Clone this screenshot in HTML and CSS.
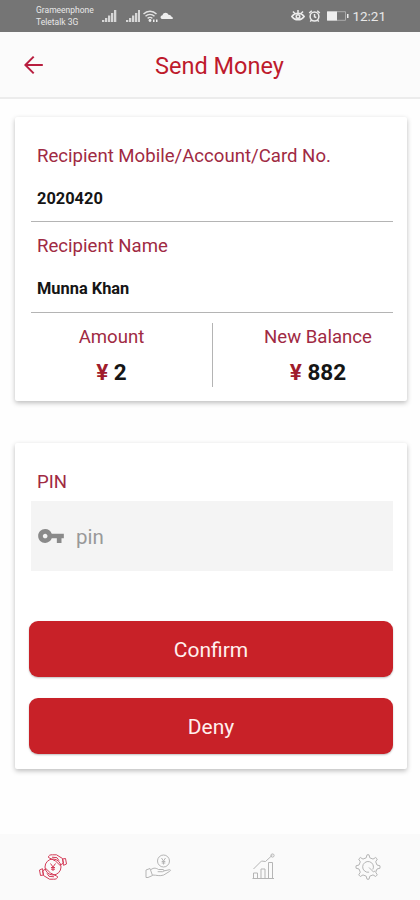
FILE: index.html
```html
<!DOCTYPE html>
<html lang="en">
  <head>
    <meta charset="UTF-8" />
    <meta name="viewport" content="width=device-width, initial-scale=1.0" />
    <title>Send Money</title>
    <link rel="stylesheet" href="styles.css">
  </head>
  <body>
    <div class="status">
      <div class="carrier">
        <p>Grameenphone</p>
        <p>Teletalk 3G</p>
      </div>
      <svg class="signals" width="72" height="14" viewBox="0 0 72 14">
        <g fill="#d6d6d6">
          <path d="M0 10h2.300v2H0zM3 8h2.300v4H3zM6 5.500h2.300V12H6zM9 3h2.300v9H9zM12 0h2.300v12H12z" />
          <path d="M24 10h2.300v2H24zM27 8h2.300v4H27zM30 5.500h2.300V12H30zM33 3h2.300v9H33zM36 0h2v12h-2z" />
        </g>
        <g fill="#eee">
          <path d="M60 9c-2-.5-2-3.500.5-3.800C61.500 2 65.500 2 66.500 4.800c2 0 2.700 1.200 3.300 2.300 1.700.2 1.700 1.900 0 1.900z" />
          <circle cx="48" cy="10.500" r="1.400" />
          <path d="M51 9.500h1.500v2.500H51zM54 9.500h1.500v2.500H54z" />
        </g>
        <g fill="none" stroke="#e2e2e2" stroke-width="1.400">
          <path d="M41.500 4c3.700-3.600 9.300-3.600 13 0M43.500 6.200c2.600-2.500 6.400-2.500 9 0M45.600 8.400c1.500-1.300 3.300-1.300 4.800 0" />
        </g>
      </svg>
      <svg class="tools" width="58" height="14" viewBox="0 0 58 14">
        <g fill="none" stroke="#ececec" stroke-width="1.500">
          <path d="M.8 7.500c3-4.200 9.400-4.200 12.400 0-3 4.400-9.400 4.400-12.400 0zM2 2.500l1.800 2M7 1v3M12 2.500l-1.800 2" />
          <circle cx="7" cy="7.500" r="1.800" />
          <circle cx="23.500" cy="7.500" r="4.400" />
          <path d="M23.500 5v2.700l1.800 1M18.200 4l2.600-2.300M28.800 4l-2.600-2.300M20.500 11l-1.200 1.600M26.500 11l1.200 1.600" />
          <path d="M36.500 2.700h18v8.600h-18z" stroke="#aaa" stroke-width="1" />
        </g>
        <path d="M36 2.500h10v9H36zM56 5h1.500v4H56z" fill="#eee" />
      </svg>
      <span class="time">12:21</span>
    </div>

    <div class="header">
      <svg class="back" width="20" height="20" viewBox="0 0 20 20" fill="none" stroke="#b81e3f" stroke-width="2">
        <path d="M18.800 10H1.500M9.700 1.600L1.300 10l8.400 8.400" />
      </svg>
      <h1>Send Money</h1>
    </div>

    <div class="main">
      <div class="card info">
        <div class="row">
          <p class="label">Recipient Mobile/Account/Card No.</p>
          <p class="value">2020420</p>
        </div>
        <div class="row">
          <p class="label">Recipient Name</p>
          <p class="value">Munna Khan</p>
        </div>
        <div class="totals">
          <div class="total">
            <p class="label">Amount</p>
            <p class="money"><span>¥</span> 2</p>
          </div>
          <div class="line"></div>
          <div class="total balance">
            <p class="label">New Balance</p>
            <p class="money"><span>¥</span> 882</p>
          </div>
        </div>
      </div>

      <div class="card form">
        <p class="label">PIN</p>
        <div class="field">
          <svg width="28" height="28" viewBox="0 0 24 24" fill="#8a8a8a">
            <path d="M12.650 10C11.830 7.670 9.610 6 7 6c-3.310 0-6 2.690-6 6s2.690 6 6 6c2.610 0 4.830-1.670 5.650-4H17v4h4v-4h2v-4H12.650zM7 14c-1.100 0-2-.9-2-2s.9-2 2-2 2 .9 2 2-.9 2-2 2z" />
          </svg>
          <input type="text" placeholder="pin" />
        </div>
        <button class="btn">Confirm</button>
        <button class="btn">Deny</button>
      </div>
    </div>

    <div class="nav">
      <a class="active">
        <svg width="30" height="28" viewBox="0 0 30 28">
          <circle cx="15" cy="14" r="8" />
          <path d="M12.500 10.500l2.500 3.500 2.500-3.500M15 14v4M13 14.500h4M13 16.200h4" />
          <path d="M10.500 4.500c-.5-2 2-3 4-2.700h4l6 3.700 1 4.500-3.500 2.300-4.500-4.300-7-3.500M14 4.200l5 .5 2 3M24.500 6l3-.5 1 5.500-3 1.300z" />
          <path d="M19.500 23.500c.5 2-2 3-4 2.700h-4l-6-3.700-1-4.500L8 15.700l4.500 4.300 7 3.500M16 23.800l-5-.5-2-3M5.500 22l-3 .5-1-5.500 3-1.300z" />
        </svg>
      </a>
      <a>
        <svg width="30" height="28" viewBox="0 0 30 28">
          <circle cx="20.500" cy="8" r="6" />
          <path d="M18.500 5l2 3 2-3M20.500 8v3.500M18.700 8.500h3.600M18.700 10h3.600" />
          <path d="M3 17l4-1.500 2.500 7L5 24.500H3zM8 16.500c3-2 5-1.500 7.500 0h4.500c1.500.2 1.200 2-.3 2.200h-5M20.500 18l6-1.300c1.300 0 1.200 1 .2 1.600l-6 3.700c-4 1.500-7 0-11.200 0" />
        </svg>
      </a>
      <a>
        <svg width="30" height="28" viewBox="0 0 30 28">
          <path d="M4.500 25.500h21.500M5.500 25.500V20h4v5.500M13 25.500v-9.500h4v9.500M20.500 25.500V9.500h4v16M5.500 16l8-8 4 .5 7-6.500" />
          <circle cx="24.500" cy="2.500" r="1.600" />
        </svg>
      </a>
      <a>
        <svg width="30" height="28" viewBox="0 0 30 28">
          <path d="M13.200 4.800l.8-3h2l.8 3 3.200 1.300 2.700-1.600 1.600 1.600-1.600 2.700 1.300 3.200 3 .8v2.400l-3 .8-1.300 3.200 1.600 2.700-1.600 1.600-2.700-1.600-3.200 1.300-.8 3h-2l-.8-3L10 21.900l-2.700 1.600-1.600-1.600 1.600-2.700L6 16l-3-.8v-2.400l3-.8 1.300-3.200-1.600-2.700 1.600-1.600L10 6.100z" />
          <path d="M19.800 16.500a5.400 5.400 0 1 0-3.700 2.700M16 14.500l4.500 4.500 1.700-1.200" />
        </svg>
      </a>
    </div>
  </body>
</html>
```

FILE: styles.css
```css
* {
  margin: 0;
  padding: 0;
  box-sizing: border-box;
}
body {
  height: 900px;
  display: flex;
  flex-direction: column;
  background-color: #fefefe;
  font-family: Roboto, "Liberation Sans", sans-serif;
  overflow: hidden;
}

.status {
  height: 32px;
  padding: 0 34px 0 36px;
  display: flex;
  align-items: center;
  background-color: #757575;
  color: #e8e8e8;
}
.carrier {
  width: 66px;
  font-size: 8.500px;
  line-height: 12px;
}
.signals {
  margin-top: 1px;
}
.tools {
  margin-left: auto;
}
.time {
  margin-left: 3px;
  font-size: 13.500px;
}

.header {
  height: 67px;
  padding-left: 24px;
  display: flex;
  align-items: center;
  background-color: #fbfbfb;
  border-bottom: 2px solid #ececec;
}
.header h1 {
  flex: 1;
  padding-top: 2px;
  padding-right: 25px;
  text-align: center;
  font-size: 23.500px;
  font-weight: 400;
  color: #be1a2c;
}

.main {
  flex: 1;
  padding: 18px 13px 0 15px;
}
.card {
  background-color: #fff;
  border-radius: 2px;
  box-shadow: 0 2px 5px rgba(0, 0, 0, 0.26);
}
.label {
  font-size: 18.600px;
  line-height: 22px;
  color: #a02a43;
}

.info {
  height: 284px;
  padding: 27px 14px 0 16px;
}
.row {
  height: 91px;
  padding-left: 6px;
  border-bottom: 1px solid #b4b4b4;
}
.row:first-child {
  height: 78px;
  padding-top: 1px;
}
.row + .row {
  padding-top: 13px;
}
.value {
  margin-top: 22px;
  font-size: 16.400px;
  font-weight: 700;
  line-height: 20px;
  color: #151515;
}
.totals {
  display: flex;
  padding-top: 10px;
}
.total {
  width: 181px;
  padding-top: 3px;
  padding-right: 19px;
  text-align: center;
}
.balance {
  padding-left: 30px;
  padding-right: 0;
}
.line {
  width: 1px;
  height: 64px;
  margin-left: 1px;
  background-color: #b4b4b4;
}
.money {
  margin-top: 11px;
  font-size: 22.500px;
  font-weight: 700;
  line-height: 26px;
  color: #151515;
}
.money span {
  color: #a01c2c;
}

.form {
  height: 326px;
  margin-top: 42px;
  padding: 28px 14px 0;
}
.form .label {
  padding-left: 8px;
}
.field {
  height: 70px;
  margin: 8px 0 50px 2px;
  padding-left: 6px;
  display: flex;
  align-items: center;
  background-color: #f4f4f4;
}
.field input {
  width: 200px;
  margin-left: 11px;
  padding-top: 2px;
  border: none;
  outline: none;
  background: none;
  font: 20.500px Roboto, "Liberation Sans", sans-serif;
}
.field input::placeholder {
  color: #999;
}
.btn {
  display: block;
  width: 100%;
  height: 56px;
  margin-bottom: 21px;
  padding-top: 2px;
  border: none;
  border-radius: 9px;
  background-color: #c82128;
  box-shadow: 0 1px 2px rgba(0, 0, 0, 0.25);
  color: #fff0ee;
  font: 21px Roboto, "Liberation Sans", sans-serif;
}

.nav {
  height: 66px;
  display: flex;
  background-color: #fafafa;
}
.nav a {
  flex: 1;
  display: flex;
  align-items: center;
  justify-content: center;
}
.nav svg {
  fill: none;
  stroke: #b5b5b5;
  stroke-width: 1;
  stroke-linejoin: round;
}
.nav .active svg {
  stroke: #d43c58;
}
```
